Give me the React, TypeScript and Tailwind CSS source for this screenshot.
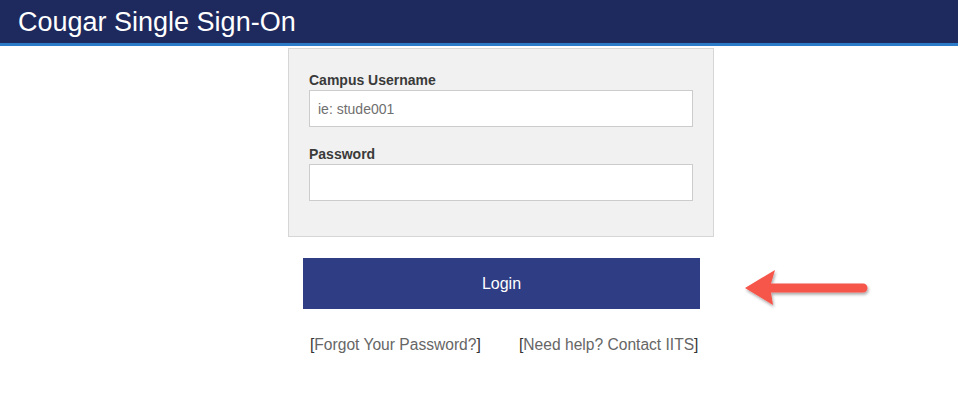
import React from 'react';

function Arrow() {
  return (
    <svg
      className="absolute left-[738px] top-[262px]"
      width="140"
      height="54"
      viewBox="0 0 140 54"
    >
      <defs>
        <filter id="sh" x="-20%" y="-40%" width="140%" height="180%">
          <feDropShadow dx="1" dy="2" stdDeviation="1.6" floodColor="#000" floodOpacity="0.35" />
        </filter>
      </defs>
      <g filter="url(#sh)" fill="#f6544a">
        <path d="M7 26 L37 8 L33 21.5 L125 21.5 A4.5 4.5 0 0 1 125 30.5 L33 30.5 L35 43 Z" />
      </g>
    </svg>
  );
}

export default function App() {
  return (
    <div className="relative min-h-[406px] bg-white font-['Liberation_Sans',Arial,sans-serif]">
      <header className="h-[46px] border-b-[3px] border-[#2b7bc8] bg-[#1e2a5e] pl-[18px]">
        <h1 className="pt-[5px] text-[27px] leading-[34px] text-white">Cougar Single Sign-On</h1>
      </header>

      <main className="ml-[288px] w-[426px] pt-[2px]">
        <form className="border border-[#d6d6d6] bg-[#f1f1f1] px-5 pt-[21px] pb-[35px]">
          <label className="block text-[14px] font-bold leading-[20px] text-[#3a3a3a]">Campus Username</label>
          <input
            type="text"
            placeholder="ie: stude001"
            className="block h-[37px] w-full border border-[#cccccc] bg-white px-[8px] text-[14px] text-[#333] placeholder:text-[#6f6f6f] outline-none"
          />
          <label className="mt-[17px] block text-[14px] font-bold leading-[20px] text-[#3a3a3a]">Password</label>
          <input
            type="password"
            className="block h-[37px] w-full border border-[#cccccc] bg-white px-[8px] text-[14px] outline-none"
          />
        </form>

        <button
          type="button"
          className="ml-[15px] mt-[21px] flex h-[51px] w-[397px] items-center justify-center bg-[#2f3e84] text-[16px] text-white"
        >
          Login
        </button>

        <div className="mt-[26px] flex pl-[22px] text-[15.6px] leading-[20px] text-[#666]">
          <a className="w-[209px]">
            <span className="text-[#333]">[</span>Forgot Your Password?<span className="text-[#333]">]</span>
          </a>
          <a>
            <span className="text-[#333]">[</span>Need help? Contact IITS<span className="text-[#333]">]</span>
          </a>
        </div>
      </main>

      <Arrow />
    </div>
  );
}
